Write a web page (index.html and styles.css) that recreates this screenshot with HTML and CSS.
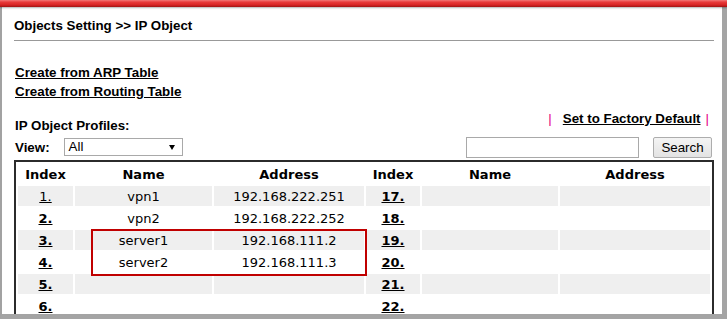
FILE: index.html
```html
<!DOCTYPE html>
<html lang="en">
<head>
    <meta charset="UTF-8">
    <meta name="viewport" content="width=device-width, initial-scale=1.0">
    <title>Objects Setting - IP Object</title>
    <link rel="stylesheet" href="styles.css">
</head>
<body>
    <div class="shot">
        <div class="topbar"></div>
        <div class="window">
            <h1 class="title">Objects Setting &gt;&gt; IP Object</h1>

            <div class="create-links">
                <a href="#">Create from ARP Table</a>
                <a href="#">Create from Routing Table</a>
            </div>

            <div class="toolbar">
                <div class="toolbar-left">
                    <div class="profiles-label">IP Object Profiles:</div>
                    <div class="view-row">
                        <span>View:</span>
                        <div class="select">
                            <span>All</span>
                            <span class="arrow"></span>
                        </div>
                    </div>
                </div>
                <div class="toolbar-right">
                    <div class="factory-row">
                        <span class="pipe pipe-left">|</span><a href="#">Set to Factory Default</a><span class="pipe pipe-right">|</span>
                    </div>
                    <div class="search-row">
                        <input type="text" class="search-input">
                        <button type="button" class="btn-search">Search</button>
                    </div>
                </div>
            </div>

            <table class="profiles">
                <tr>
                    <th>Index</th>
                    <th>Name</th>
                    <th>Address</th>
                    <th>Index</th>
                    <th>Name</th>
                    <th>Address</th>
                </tr>
                <tr class="shade">
                    <td><a href="#" class="idx idx-current">1.</a></td>
                    <td>vpn1</td>
                    <td>192.168.222.251</td>
                    <td><a href="#" class="idx">17.</a></td>
                    <td></td>
                    <td></td>
                </tr>
                <tr>
                    <td><a href="#" class="idx">2.</a></td>
                    <td>vpn2</td>
                    <td>192.168.222.252</td>
                    <td><a href="#" class="idx">18.</a></td>
                    <td></td>
                    <td></td>
                </tr>
                <tr class="shade">
                    <td><a href="#" class="idx">3.</a></td>
                    <td>server1</td>
                    <td>192.168.111.2</td>
                    <td><a href="#" class="idx">19.</a></td>
                    <td></td>
                    <td></td>
                </tr>
                <tr>
                    <td><a href="#" class="idx">4.</a></td>
                    <td>server2</td>
                    <td>192.168.111.3</td>
                    <td><a href="#" class="idx">20.</a></td>
                    <td></td>
                    <td></td>
                </tr>
                <tr class="shade">
                    <td><a href="#" class="idx">5.</a></td>
                    <td></td>
                    <td></td>
                    <td><a href="#" class="idx">21.</a></td>
                    <td></td>
                    <td></td>
                </tr>
                <tr>
                    <td><a href="#" class="idx">6.</a></td>
                    <td></td>
                    <td></td>
                    <td><a href="#" class="idx">22.</a></td>
                    <td></td>
                    <td></td>
                </tr>
            </table>

            <div class="highlight"></div>
        </div>
    </div>
</body>
</html>
```

FILE: styles.css
```css
* {
    margin: 0;
    padding: 0;
    box-sizing: border-box;
}

body {
    font-family: "Liberation Sans", Arial, sans-serif;
    font-size: 13.33px;
    color: #000;
    background-color: #fff;
}

a {
    color: #000;
    font-weight: bold;
    text-decoration: underline;
}

.shot {
    width: 727px;
    height: 319px;
    overflow: hidden;
}

.topbar {
    position: relative;
    z-index: 1;
    height: 7px;
    background: linear-gradient(to bottom, #f27878 0%, #e83a3a 30%, #d82424 70%, #9e1414 100%);
    box-shadow: 0 1px 2px rgba(0, 0, 0, 0.3);
}

.window {
    position: relative;
    height: 312px;
    padding: 0 8px 0 12px;
    border-left: 2px solid #a2a2a2;
    border-right: 5px solid #a4a4a4;
    border-bottom: 5px solid #a4a4a4;
    overflow: hidden;
}

.title {
    font-size: 13.33px;
    font-weight: bold;
    line-height: 16px;
    padding-top: 11px;
    padding-bottom: 6px;
    border-bottom: 1px solid #999;
}

.create-links {
    display: flex;
    flex-direction: column;
    align-items: flex-start;
    margin-top: 22px;
    padding-left: 1px;
    line-height: 19px;
}

.toolbar {
    display: flex;
    justify-content: space-between;
    height: 59px;
}

.toolbar-left {
    padding-top: 15px;
    padding-left: 1px;
    font-weight: bold;
}

.profiles-label {
    line-height: 19px;
}

.view-row {
    display: flex;
    align-items: center;
    gap: 14px;
    height: 18px;
    margin-top: 3px;
}

.select {
    display: flex;
    align-items: center;
    justify-content: space-between;
    width: 119px;
    height: 18px;
    padding: 0 7px 0 4px;
    border: 1px solid #a9a9a9;
    font-weight: normal;
    line-height: 16px;
}

.arrow {
    width: 0;
    height: 0;
    border-left: 3px solid transparent;
    border-right: 3px solid transparent;
    border-top: 5px solid #000;
}

.toolbar-right {
    display: flex;
    flex-direction: column;
    align-items: flex-end;
    padding-top: 8px;
    padding-right: 2px;
}

.factory-row {
    line-height: 19px;
    padding-right: 3px;
}

.pipe {
    color: #e4007f;
}

.pipe-left {
    margin-right: 11px;
}

.pipe-right {
    margin-left: 5px;
}

.search-row {
    display: flex;
    gap: 14px;
    margin-top: 9px;
}

.search-input {
    width: 173px;
    height: 21px;
    border: 1px solid #a9a9a9;
    background-color: #fff;
}

.btn-search {
    width: 59px;
    height: 21px;
    border: 1px solid #adadad;
    border-radius: 2px;
    background: linear-gradient(to bottom, #f4f4f4, #e3e3e3);
    font-family: "Liberation Sans", Arial, sans-serif;
    font-size: 13.33px;
    color: #000;
}

.profiles {
    width: 700px;
    border: 2px solid #2b2b2b;
    border-spacing: 2px;
    table-layout: fixed;
    font-family: "DejaVu Sans", Verdana, sans-serif;
    font-size: 13px;
}

.profiles th,
.profiles td {
    height: 20px;
    padding: 0;
    text-align: center;
    vertical-align: middle;
    white-space: nowrap;
}

.profiles th {
    font-weight: bold;
}

.profiles th:nth-child(1) { width: 55px; }
.profiles th:nth-child(2) { width: 137px; }
.profiles th:nth-child(3) { width: 150px; }
.profiles th:nth-child(4) { width: 54px; }
.profiles th:nth-child(5) { width: 136px; }
.profiles th:nth-child(6) { width: 150px; }

.profiles tr.shade td {
    background-color: #efefef;
}

.idx {
    font-weight: bold;
}

.idx-current {
    font-weight: normal;
}

.highlight {
    position: absolute;
    left: 89px;
    top: 222px;
    width: 276px;
    height: 47px;
    border: 2px solid #c00000;
}
```
